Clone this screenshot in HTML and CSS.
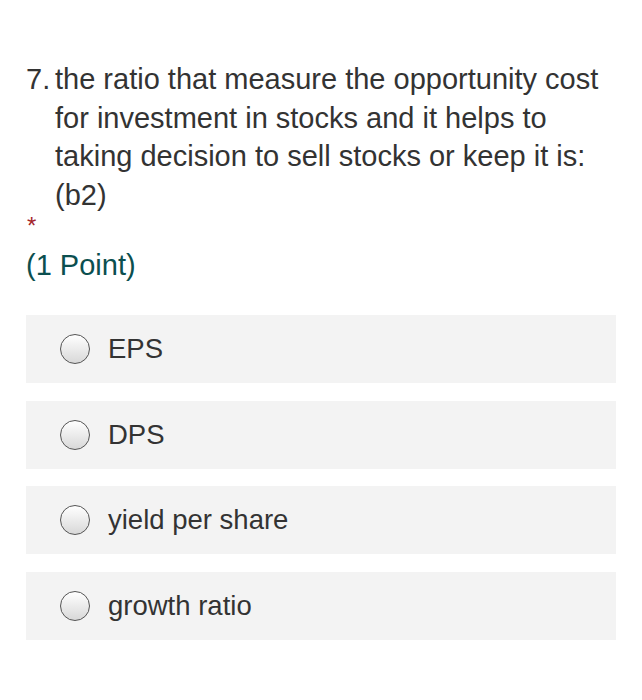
FILE: index.html
```html
<!DOCTYPE html>
<html>
<head>
<meta charset="utf-8">
<link rel="stylesheet" href="styles.css">
</head>
<body>
<div class="page">
  <div class="question">
    <span class="num">7.</span>
    <span class="title">the ratio that measure the opportunity cost for investment in stocks and it helps to taking decision to sell stocks or keep it is: (b2)</span>
  </div>
  <div class="required">*</div>
  <div class="points">(1 Point)</div>
  <div class="options">
    <label class="option"><span class="radio"></span><span class="label">EPS</span></label>
    <label class="option"><span class="radio"></span><span class="label">DPS</span></label>
    <label class="option"><span class="radio"></span><span class="label">yield per share</span></label>
    <label class="option"><span class="radio"></span><span class="label">growth ratio</span></label>
  </div>
</div>
</body>
</html>
```
FILE: styles.css
```css
html, body {
  margin: 0;
  padding: 0;
  background: #ffffff;
}
.page {
  font-family: "Liberation Sans", Arial, sans-serif;
  color: #333333;
  padding: 60px 0 0 26px;
  width: 590px;
}
.question {
  display: flex;
  font-size: 29px;
  line-height: 38.5px;
}
.num {
  flex: 0 0 29px;
}
.title {
  flex: 1;
}
.required {
  color: #a4262c;
  font-size: 24px;
  line-height: 24px;
  height: 24px;
  padding-left: 1px;
}
.points {
  color: #0b4f4f;
  font-size: 29px;
  line-height: 38px;
  margin-top: 8px;
}
.options {
  display: flex;
  flex-direction: column;
  gap: 17.6px;
  margin-top: 31px;
}
.option {
  display: flex;
  align-items: center;
  height: 68px;
  background: #f3f3f3;
  padding-left: 34px;
}
.radio {
  box-sizing: border-box;
  width: 30px;
  height: 30px;
  border: 1.5px solid #555555;
  border-radius: 50%;
  background: linear-gradient(#ffffff, #d8d8d8);
  flex: 0 0 auto;
}
.label {
  margin-left: 18px;
  font-size: 27.5px;
  color: #333333;
}
```
